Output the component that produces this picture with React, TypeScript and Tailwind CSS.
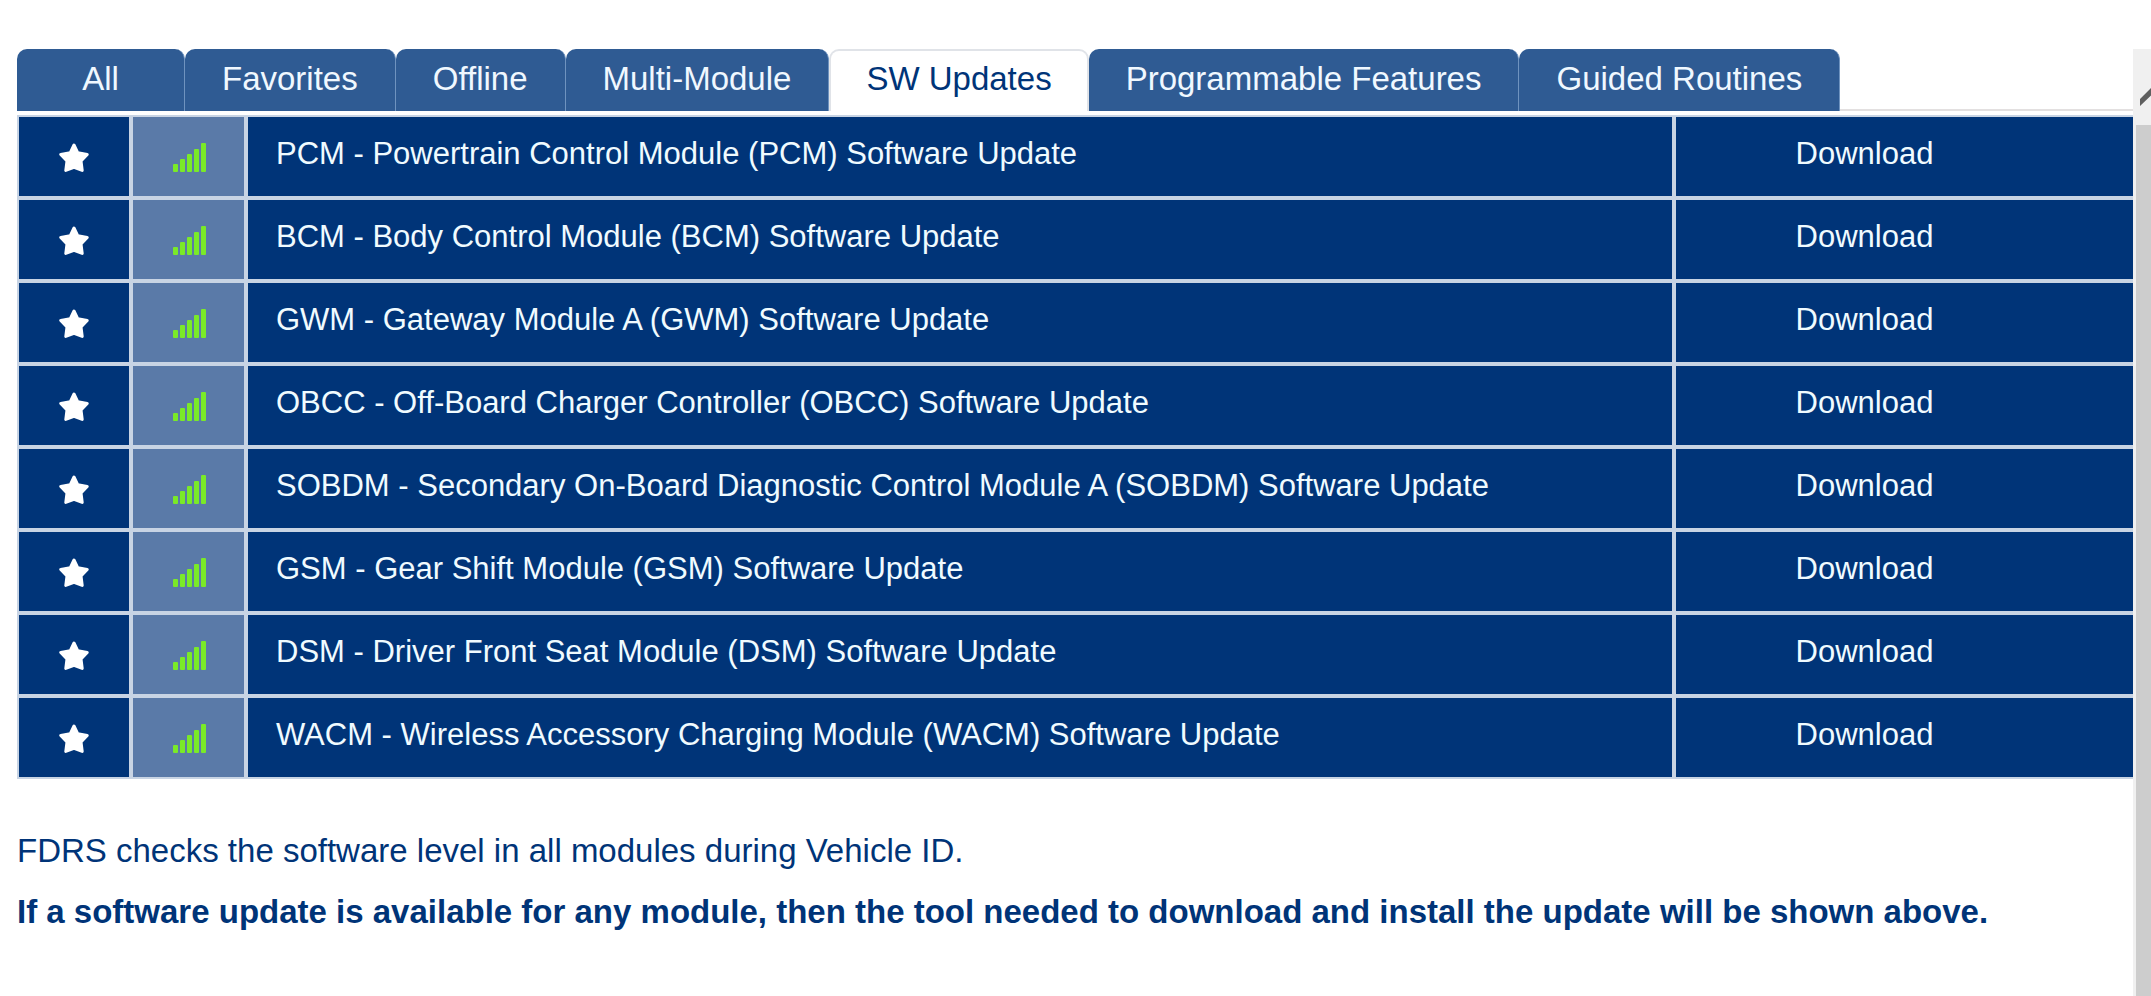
import React, { useState } from 'react';
import clsx from 'clsx';

const tabs = [
  'All',
  'Favorites',
  'Offline',
  'Multi-Module',
  'SW Updates',
  'Programmable Features',
  'Guided Routines',
];

const updates = [
  'PCM - Powertrain Control Module (PCM) Software Update',
  'BCM - Body Control Module (BCM) Software Update',
  'GWM - Gateway Module A (GWM) Software Update',
  'OBCC - Off-Board Charger Controller (OBCC) Software Update',
  'SOBDM - Secondary On-Board Diagnostic Control Module A (SOBDM) Software Update',
  'GSM - Gear Shift Module (GSM) Software Update',
  'DSM - Driver Front Seat Module (DSM) Software Update',
  'WACM - Wireless Accessory Charging Module (WACM) Software Update',
];

const StarIcon: React.FC = () => (
  <svg viewBox="0 0 30 30" className="w-[30px] h-[30px]" aria-hidden="true">
    <path
      d="M15 2 L18.8 9.8 L28.2 11.4 L22 18 L23.2 27.4 L15 24.4 L6.8 27.4 L8 18 L1.8 11.4 L11.2 9.8 Z"
      fill="#fff"
      stroke="#fff"
      strokeWidth="3"
      strokeLinejoin="round"
    />
  </svg>
);

const SignalIcon: React.FC = () => (
  <svg viewBox="0 0 34 30" className="w-[34px] h-[30px]" role="img" aria-label="Online">
    <g fill="#7aea28">
      <rect x="1" y="21" width="5" height="8" rx="1" />
      <rect x="8" y="16" width="5" height="13" rx="1" />
      <rect x="15" y="11" width="5" height="18" rx="1" />
      <rect x="22" y="6" width="5" height="23" rx="1" />
      <rect x="29" y="0" width="5" height="29" rx="1" />
    </g>
  </svg>
);

// The bar runs past the right edge, so only its left part is visible
const ScrollBar: React.FC = () => (
  <div className="w-[18px] shrink-0 flex flex-col overflow-hidden bg-[#f0f0f0]">
    <button type="button" aria-label="Scroll up" className="h-[76px] w-[50px] shrink-0">
      <svg viewBox="0 0 50 76" className="w-[50px] h-[76px]" aria-hidden="true">
        <path d="M7 50 L25 32 L43 50 V57 L25 40 L7 57 Z" fill="#5f5f5f" />
      </svg>
    </button>
    <div className="flex-1 ml-[3px] bg-[#cdcdcd]" />
  </div>
);

export default function App() {
  const [active, setActive] = useState('SW Updates');

  return (
    <div className="min-h-screen flex bg-white pt-[49px] text-[#003478] font-['Liberation_Sans',Arial,sans-serif]">
      <main className="flex-1 min-w-0 pl-[17px]">
        {/* Tabs */}
        <div role="tablist" className="flex border-b-2 border-[#e3e0e0] mb-1">
          {tabs.map((tab) => (
            <button
              key={tab}
              type="button"
              role="tab"
              aria-selected={tab === active}
              onClick={() => setActive(tab)}
              className={clsx(
                'h-[62px] -mb-0.5 min-w-[168px] rounded-t-[10px] text-[33px] leading-9 whitespace-nowrap',
                tab === active
                  ? 'bg-white border-2 border-b-0 border-[#e0e3e8] px-[35px] pb-1'
                  : 'bg-[#2f5b93] text-[#f0f8ff] border-r border-[#6f93bf] px-[37px] pb-0.5',
              )}
            >
              {tab}
            </button>
          ))}
        </div>

        {/* Module list */}
        <table className="w-full table-fixed border-separate border-spacing-0 text-[31px] leading-9 text-[#f0fbff]">
          <colgroup>
            <col className="w-[114px]" />
            <col className="w-[115px]" />
            <col />
            <col className="w-[459px]" />
          </colgroup>
          <tbody>
            {updates.map((name) => (
              <tr key={name} className="h-[83px]">
                <td className="border-2 border-[#c8d4e4] bg-[#003478] pt-0.5">
                  <button type="button" aria-label="Favorite" className="flex mx-auto">
                    <StarIcon />
                  </button>
                </td>
                <td className="border-2 border-[#c8d4e4] bg-[#5a7aa8] pt-0.5">
                  <div className="flex justify-center">
                    <SignalIcon />
                  </div>
                </td>
                <td className="border-2 border-[#c8d4e4] bg-[#003478] pl-7 pb-1.5">{name}</td>
                <td className="border-2 border-r-0 border-[#c8d4e4] bg-[#003478] pr-20 pb-1.5 text-center">
                  <button type="button">Download</button>
                </td>
              </tr>
            ))}
          </tbody>
        </table>

        <p className="mt-[54px] text-[33px] leading-9">
          FDRS checks the software level in all modules during Vehicle ID.
        </p>
        <p className="mt-[25px] text-[33px] leading-9 font-bold">
          If a software update is available for any module, then the tool needed to download and
          install the update will be shown above.
        </p>
      </main>
      <ScrollBar />
    </div>
  );
}
